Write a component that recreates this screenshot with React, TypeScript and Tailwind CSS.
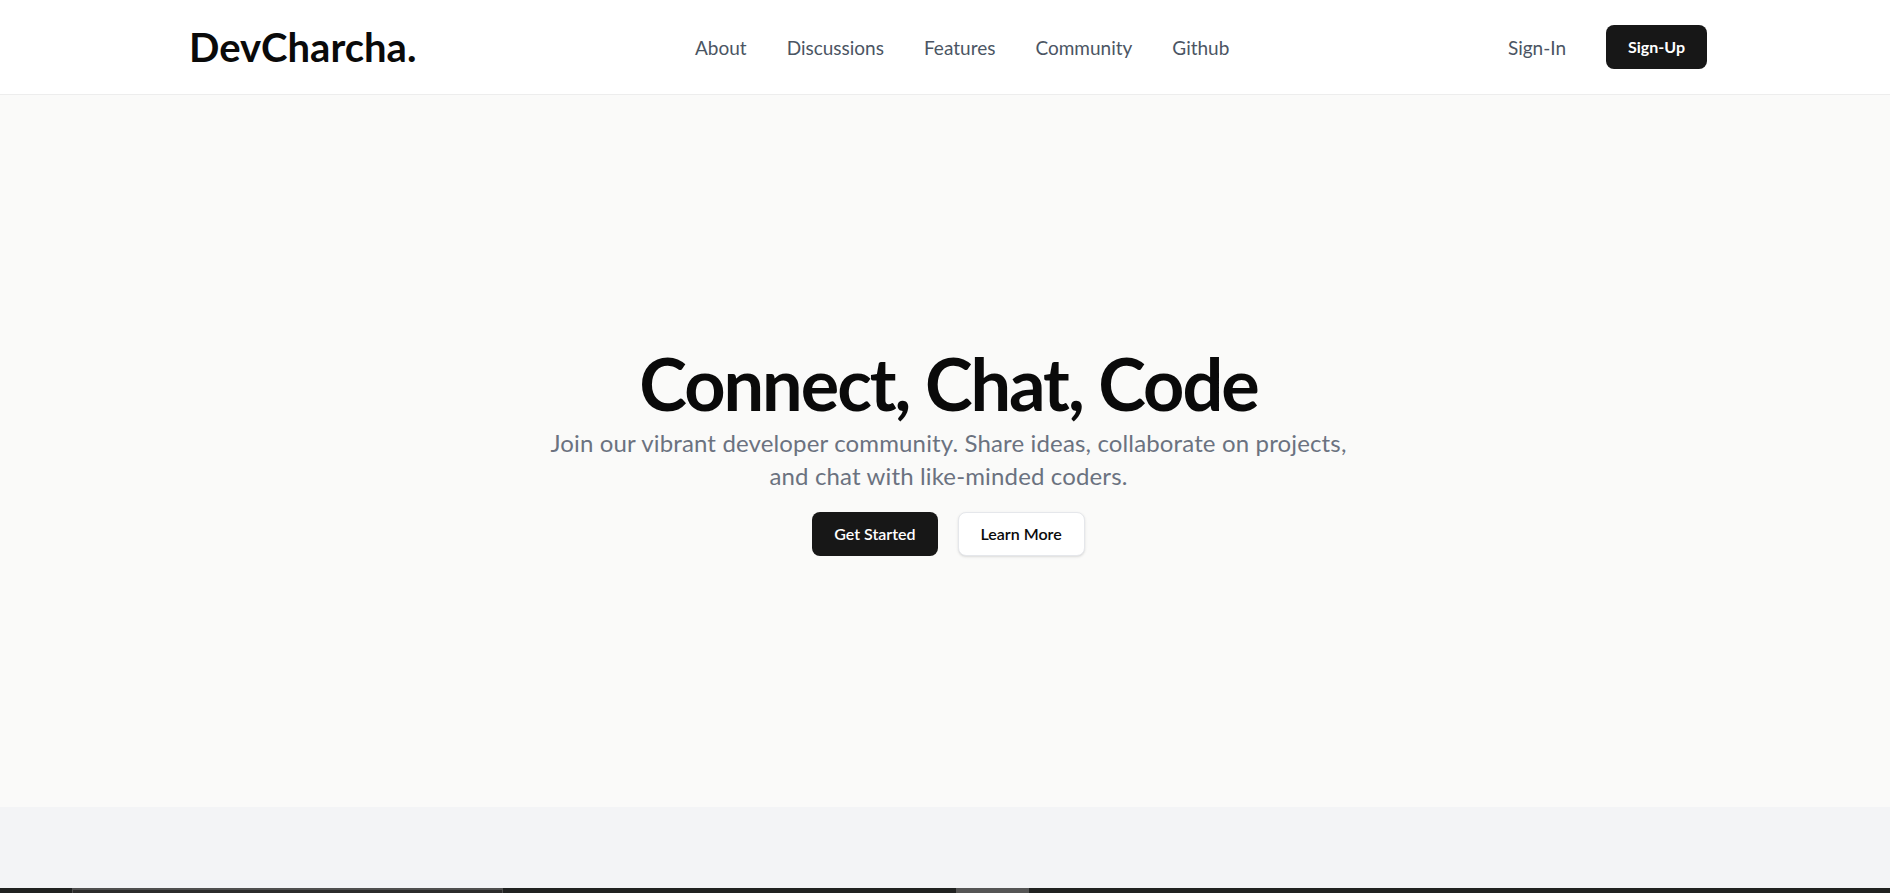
const navLinks = ['About', 'Discussions', 'Features', 'Community', 'Github'];

function Header() {
  return (
    <header className="bg-white border-b border-[#ededed]">
      <div className="flex h-[94px] items-center justify-between pl-[189px] pr-[183px]">
        <a href="#" className="text-[40px] font-bold leading-none text-[#0a0a0a]">
          DevCharcha.
        </a>

        <nav className="flex items-center gap-10 pt-0.5">
          {navLinks.map((link) => (
            <a key={link} href="#" className="text-[19px] text-[#4b5563] hover:text-black">
              {link}
            </a>
          ))}
        </nav>

        <div className="flex items-center gap-10">
          <a href="#" className="pt-0.5 text-[19px] text-[#4b5563]">
            Sign-In
          </a>
          <button className="h-11 rounded-lg bg-[#171717] px-[22px] text-base font-bold text-white">
            Sign-Up
          </button>
        </div>
      </div>
    </header>
  );
}

function Hero() {
  return (
    <section className="flex h-[712px] flex-col items-center justify-center bg-[#fafaf9] pl-[7px] text-center">
      <h1 className="text-[72px] font-bold leading-none tracking-[-0.028em] text-[#0a0a0a]">
        Connect, Chat, Code
      </h1>
      <p className="mt-[7px] text-2xl leading-[33px] tracking-[0.006em] text-[#6b7280]">
        Join our vibrant developer community. Share ideas, collaborate on projects,
        <br />
        and chat with like-minded coders.
      </p>
      <div className="mt-5 flex items-center gap-5">
        <button className="h-11 rounded-lg bg-[#171717] px-[22px] text-base font-semibold text-white">
          Get Started
        </button>
        <button className="h-11 rounded-lg border border-gray-200 bg-white px-[22px] text-base font-semibold text-[#0a0a0a] shadow-sm">
          Learn More
        </button>
      </div>
    </section>
  );
}

export default function App() {
  return (
    <div className="min-h-screen font-['Lato',sans-serif]">
      <Header />
      <Hero />

      {/* next section, only its top shows */}
      <section className="h-[81px] bg-[#f3f4f6]" />
      <section className="flex h-10 items-start bg-[#202221] pl-[72px]">
        <div className="h-10 w-[431px] border border-t-2 border-[#4f4f4f] bg-[#2b2b2b]" />
        <div className="ml-[453px] h-10 w-[73px] bg-[#555555]" />
      </section>
    </div>
  );
}
